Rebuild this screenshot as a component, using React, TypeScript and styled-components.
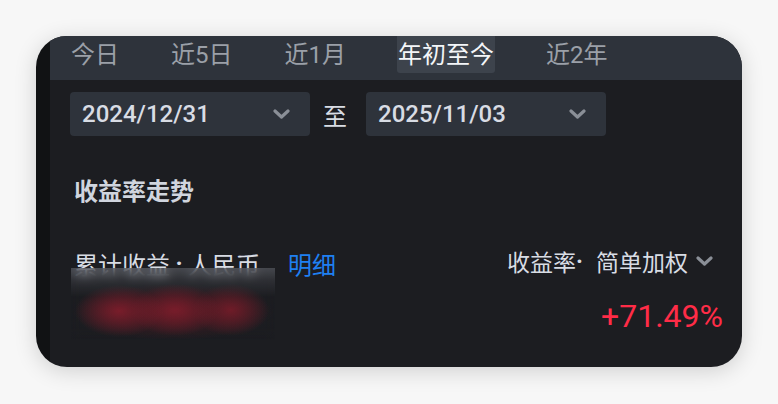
import React from "react";
import styled, { createGlobalStyle } from "styled-components";

const Global = createGlobalStyle`
  html, body { margin: 0; padding: 0; background: #ffffff; }
  body { font-family: "Roboto", "Noto Sans CJK SC", sans-serif; -webkit-font-smoothing: antialiased; }
`;

const Page = styled.div`
  width: 778px;
  height: 404px;
  padding: 36px 0 0 36px;
  box-sizing: border-box;
  background: #f7f7f7;
`;

const Card = styled.div`
  width: 706px;
  height: 331px;
  display: flex;
  border-radius: 31px;
  overflow: hidden;
  box-shadow: 0 4px 22px rgba(0, 0, 0, 0.16);
`;

const Strip = styled.div`
  width: 14px;
  flex: none;
  background: #111214;
`;

const Main = styled.div`
  flex: 1;
  display: flex;
  flex-direction: column;
  background: #1c1d21;
`;

const TabBar = styled.div`
  height: 44px;
  flex: none;
  display: flex;
  align-items: flex-start;
  gap: 52px;
  padding-left: 21px;
  background: #2e333b;
`;

const Tab = styled.div<{ $active?: boolean }>`
  height: 37px;
  display: flex;
  align-items: center;
  padding: 0 1px;
  margin: 0 -1px;
  font-size: 24px;
  line-height: 1;
  color: ${(p) => (p.$active ? "#f4f6f9" : "#9ba0a8")};
  background: ${(p) => (p.$active ? "#3d434c" : "transparent")};
  border-radius: 0 0 3px 3px;
  font-family: "Roboto", "Noto Sans CJK SC", sans-serif;
`;

const DateRow = styled.div`
  margin-top: 12px;
  padding-left: 20px;
  display: flex;
  align-items: center;
  height: 44px;
`;

const DateSelect = styled.div`
  width: 240px;
  height: 44px;
  box-sizing: border-box;
  padding: 0 20px 0 12px;
  display: flex;
  align-items: center;
  justify-content: space-between;
  background: #2e333b;
  border-radius: 4px;
  color: #d8dce4;
  font-family: "Roboto", sans-serif;
  font-weight: 500;
  font-size: 24px;
`;

const To = styled.span`
  margin: 0 19px 0 13px;
  color: #d8dce4;
  font-size: 24px;
  font-family: "Noto Sans CJK SC", sans-serif;
`;

const Section = styled.div`
  padding: 0 19px 0 24px;
  display: flex;
  flex-direction: column;
`;

const Heading = styled.div`
  margin-top: 38px;
  height: 32px;
  line-height: 32px;
  font-size: 24px;
  font-weight: 700;
  color: #d0d5de;
  font-family: "Noto Sans CJK SC", sans-serif;
`;

const Summary = styled.div`
  margin-top: 41px;
  display: flex;
  justify-content: space-between;
  align-items: flex-start;
`;

const LeftCol = styled.div`
  position: relative;
`;

const LabelRow = styled.div`
  height: 32px;
  display: flex;
  align-items: center;
  gap: 28px;
  font-family: "Roboto", "Noto Sans CJK SC", sans-serif;
  font-size: 24px;
`;

const Label = styled.span`
  display: flex;
  align-items: center;
  color: #d8dce4;
`;

const Sep = styled.span<{ $w: number; $align: "left" | "center" }>`
  display: inline-block;
  width: ${(p) => p.$w}px;
  text-align: ${(p) => p.$align};
  font-weight: 700;
`;

const Link = styled.span`
  color: #1f80f2;
`;

/* privacy mask drawn over the hidden amount */
const Mask = styled.div`
  position: absolute;
  left: -3px;
  top: 21px;
  width: 204px;
  height: 72px;
  backdrop-filter: blur(5px);
  background:
    radial-gradient(ellipse 44px 26px at 48px 43px, rgba(125, 29, 43, 0.95), rgba(125, 29, 43, 0) 100%),
    radial-gradient(ellipse 44px 26px at 104px 42px, rgba(122, 29, 43, 0.95), rgba(122, 29, 43, 0) 100%),
    radial-gradient(ellipse 38px 26px at 160px 42px, rgba(118, 28, 41, 0.9), rgba(118, 28, 41, 0) 100%),
    radial-gradient(ellipse 100px 28px at 102px 44px, rgba(92, 24, 34, 0.75), rgba(92, 24, 34, 0) 100%),
    linear-gradient(
      180deg,
      rgba(92, 95, 102, 0.65) 0%,
      rgba(66, 68, 74, 0.45) 18%,
      rgba(28, 29, 33, 0.15) 40%,
      rgba(28, 29, 33, 0) 100%
    );
`;

const RightCol = styled.div`
  display: flex;
  flex-direction: column;
  align-items: flex-end;
  margin-top: -2px;
`;

const RateSelect = styled.div`
  height: 32px;
  display: flex;
  align-items: center;
  gap: 8px;
  color: #d8dce4;
  font-family: "Roboto", "Noto Sans CJK SC", sans-serif;
  font-size: 23px;
  margin-right: 10px;
`;

const RateText = styled.span`
  display: flex;
  align-items: center;
`;

const Percent = styled.div`
  margin-top: 19px;
  height: 40px;
  line-height: 40px;
  font-family: "Roboto", sans-serif;
  font-size: 32px;
  color: #ff2c47;
`;

const Chevron = () => (
  <svg width={17} height={10} viewBox="0 0 17 10" fill="none">
    <path d="M2 2 L8.5 8 L15 2" stroke="#8a8f97" strokeWidth="3.2" strokeLinecap="round" strokeLinejoin="round" />
  </svg>
);

const tabs = ["今日", "近5日", "近1月", "年初至今", "近2年"];

export default function App() {
  return (
    <>
      <Global />
      <Page>
        <Card>
          <Strip />
          <Main>
            <TabBar>
              {tabs.map((t) => (
                <Tab key={t} $active={t === "年初至今"}>
                  {t}
                </Tab>
              ))}
            </TabBar>
            <DateRow>
              <DateSelect>
                <span>2024/12/31</span>
                <Chevron />
              </DateSelect>
              <To>至</To>
              <DateSelect>
                <span>2025/11/03</span>
                <Chevron />
              </DateSelect>
            </DateRow>
            <Section>
              <Heading>收益率走势</Heading>
              <Summary>
                <LeftCol>
                  <LabelRow>
                    <Label>
                      累计收益
                      <Sep $w={18} $align="center">·</Sep>
                      人民币
                    </Label>
                    <Link>明细</Link>
                  </LabelRow>
                  <Mask />
                </LeftCol>
                <RightCol>
                  <RateSelect>
                    <RateText>
                      收益率
                      <Sep $w={20} $align="left">·</Sep>
                      简单加权
                    </RateText>
                    <Chevron />
                  </RateSelect>
                  <Percent>+71.49%</Percent>
                </RightCol>
              </Summary>
            </Section>
          </Main>
        </Card>
      </Page>
    </>
  );
}
